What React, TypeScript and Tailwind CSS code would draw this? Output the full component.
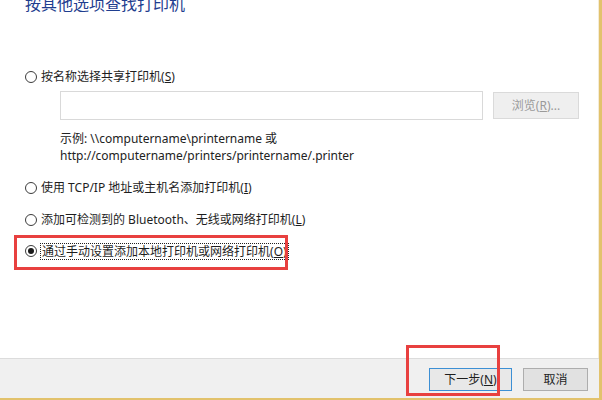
const Radio = ({ checked = false }: { checked?: boolean }) => (
  <span className="relative w-[12px] h-[12px] rounded-full border border-[#3c3c3c] bg-white flex items-center justify-center shrink-0">
    {checked && <span className="w-[6px] h-[6px] rounded-full bg-[#1a1a1a]" />}
  </span>
);

const Option = ({
  label,
  mnemonic,
  checked,
  focused,
}: {
  label: string;
  mnemonic: string;
  checked?: boolean;
  focused?: boolean;
}) => (
  <div className="flex items-center h-[16px] gap-[4px]">
    <Radio checked={checked} />
    <span
      className={
        focused
          ? "leading-[15px] px-[1px] outline-1 outline-dotted outline-[#222]"
          : "leading-[16px]"
      }
    >
      {label}(<span className="underline">{mnemonic}</span>)
    </span>
  </div>
);

export default function App() {
  return (
    <div
      className="relative w-[602px] h-[400px] overflow-hidden bg-white text-[12px] text-[#1e1e1e] border-r-[3px] border-b-[2px] border-[#e2c26c]"
      style={{ fontFamily: '"Noto Sans", "Noto Sans CJK SC", sans-serif' }}
    >
      {/* Main content */}
      <div className="h-[358px] pl-[25px] flex flex-col border-r border-[#f4ecd6]">
        <div className="-mt-[6px] h-[20px] leading-[20px] text-[16px] text-[#1f3e8f]">
          按其他选项查找打印机
        </div>

        <div className="mt-[55px]">
          <Option label="按名称选择共享打印机" mnemonic="S" />
        </div>

        <div className="mt-[6px] ml-[35px] flex items-start gap-[10px]">
          <div className="w-[423px] h-[29px] shrink-0 border border-[#d9d9d9] bg-white" />
          <button className="mt-[1px] w-[86px] h-[27px] shrink-0 border border-[#dadada] bg-[#efefef] text-[#9a9a9a]">
            浏览(<span className="underline">R</span>)...
          </button>
        </div>

        <div className="mt-[10px] ml-[35px] leading-[17px] text-[#222]">
          <div>示例: \\computername\printername 或</div>
          <div>http://computername/printers/printername/.printer</div>
        </div>

        <div className="mt-[16px]">
          <Option label="使用 TCP/IP 地址或主机名添加打印机" mnemonic="I" />
        </div>
        <div className="mt-[16px]">
          <Option label="添加可检测到的 Bluetooth、无线或网络打印机" mnemonic="L" />
        </div>
        <div className="mt-[15px]">
          <Option label="通过手动设置添加本地打印机或网络打印机" mnemonic="O" checked focused />
        </div>
      </div>

      {/* Footer */}
      <div className="h-[40px] bg-[#f0f0f0] border-t border-[#dcdcdc] flex items-start justify-end gap-[11px] pr-[11px] pt-[9px]">
        <button className="w-[83px] h-[23px] border border-[#3c8fd4] bg-[#e8e8e8]">
          下一步(<span className="underline">N</span>)
        </button>
        <button className="w-[65px] h-[23px] border border-[#adadad] bg-[#e1e1e1]">
          取消
        </button>
      </div>

      {/* Red highlight annotations */}
      <div className="absolute left-[14px] top-[235px] w-[274px] h-[35px] border-[3px] border-[#e8403f]" />
      <div className="absolute left-[406px] top-[345px] w-[94px] h-[51px] border-[3px] border-[#e8403f]" />
    </div>
  );
}
